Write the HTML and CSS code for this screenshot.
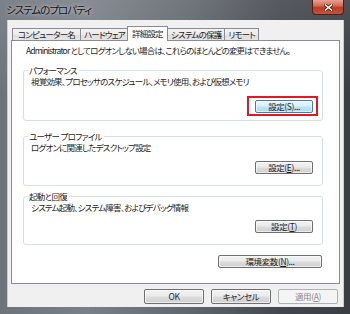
FILE: index.html
```html
<!DOCTYPE html>
<html lang="ja">
<head>
<meta charset="utf-8">
<title>システムのプロパティ</title>
<link rel="stylesheet" href="styles.css">
</head>
<body>
<div class="window">
  <div class="titlebar">
    <span class="title">システムのプロパティ</span>
    <div class="close">
      <svg width="9" height="7" viewBox="0 0 9 7"><path d="M1.5 1 L7.5 6 M7.5 1 L1.5 6" stroke="#5a1a10" stroke-width="3" stroke-linecap="square"/><path d="M1.5 1 L7.5 6 M7.5 1 L1.5 6" stroke="#fff" stroke-width="1.6" stroke-linecap="square"/></svg>
    </div>
  </div>
  <div class="client">
    <div class="tabs">
      <div class="tab tab--wide">コンピューター名</div>
      <div class="tab">ハードウェア</div>
      <div class="tab tab--active">詳細設定</div>
      <div class="tab">システムの保護</div>
      <div class="tab">リモート</div>
    </div>
    <div class="panel">
      <p class="note">Administrator としてログオンしない場合は、これらのほとんどの変更はできません。</p>
      <fieldset class="group group--perf">
        <legend>パフォーマンス</legend>
        <p class="desc">視覚効果、プロセッサのスケジュール、メモリ使用、および仮想メモリ</p>
        <div class="btnrow"><button class="btn btn--default btn--flagged">設定(S)...</button></div>
      </fieldset>
      <fieldset class="group group--profile">
        <legend>ユーザー プロファイル</legend>
        <p class="desc">ログオンに関連したデスクトップ設定</p>
        <div class="btnrow"><button class="btn">設定(<u>E</u>)...</button></div>
      </fieldset>
      <fieldset class="group group--startup">
        <legend>起動と回復</legend>
        <p class="desc">システム起動、システム障害、およびデバッグ情報</p>
        <div class="btnrow"><button class="btn">設定(<u>T</u>)</button></div>
      </fieldset>
      <div class="envrow"><button class="btn btn--wide">環境変数(<u>N</u>)...</button></div>
    </div>
    <div class="footer">
      <button class="btn btn--foot">OK</button>
      <button class="btn btn--foot">キャンセル</button>
      <button class="btn btn--foot" disabled>適用(<u>A</u>)</button>
    </div>
  </div>
</div>
</body>
</html>
```

FILE: styles.css
```css
html, body {
  margin: 0;
  padding: 0;
}
body {
  width: 350px;
  height: 314px;
  overflow: hidden;
  font-family: "Noto Sans CJK JP", "Noto Sans", sans-serif;
  font-feature-settings: "palt";
  color: #1e1e1e;
}
.window {
  width: 350px;
  height: 314px;
  box-sizing: border-box;
  padding: 0 6px 7px 7px;
  display: flex;
  flex-direction: column;
  background:
    linear-gradient(180deg, rgba(255,255,255,0.10) 0%, rgba(255,255,255,0) 30%),
    linear-gradient(90deg, #6d737b 0%, #7b8088 25%, #60656c 55%, #43474d 80%, #3a3e44 100%);
}
.titlebar {
  height: 20px;
  flex: none;
  display: flex;
  justify-content: space-between;
  align-items: flex-start;
}
.title {
  font-size: 10.5px;
  line-height: 19px;
  letter-spacing: -1px;
  margin-left: -1px;
  color: #101010;
  text-shadow: 0 0 5px rgba(255,255,255,0.55), 0 0 2px rgba(255,255,255,0.4);
}
.close {
  width: 32px;
  height: 15px;
  box-sizing: border-box;
  border: 1px solid #4b2019;
  border-top: none;
  border-radius: 0 0 4px 4px;
  background: linear-gradient(180deg, #e4a396 0%, #d76a55 40%, #bd3b23 55%, #c5523a 100%);
  display: flex;
  align-items: center;
  justify-content: center;
}
.client {
  flex: 1;
  background: #f0f0f0;
  display: flex;
  flex-direction: column;
  box-shadow: inset 1px 0 0 #c9ced4, inset -1px 0 0 #c9ced4;
}
.tabs {
  display: flex;
  align-items: flex-end;
  height: 20px;
  padding-left: 5px;
  position: relative;
  z-index: 1;
}
.tab {
  font-size: 8.5px;
  letter-spacing: -0.8px;
  line-height: 11px;
  height: 12px;
  box-sizing: border-box;
  padding: 0 3px 0 3px;
  border: 1px solid #898c95;
  border-bottom: none;
  margin-left: -1px;
  background: linear-gradient(180deg, #f3f3f3 0%, #ebebeb 50%, #dedede 51%, #e5e5e5 100%);
  color: #1e1e1e;
  white-space: nowrap;
}
.tab:first-child {
  margin-left: 0;
}
.tab--wide {
  padding: 0 5px 0 5px;
}
.tab--active {
  height: 15px;
  margin: 0 -1px -1px -2px;
  padding: 1px 4px 0;
  background: #fff;
  position: relative;
}
.tab--active + .tab {
  margin-left: 0;
}
.panel {
  margin: 0 4px 0 4px;
  height: 244px;
  box-sizing: border-box;
  border: 1px solid #898c95;
  background: #fff;
  display: flex;
  flex-direction: column;
}
.note {
  margin: 3px 0 0 14px;
  font-size: 8.5px;
  letter-spacing: -0.85px;
  line-height: 12px;
  white-space: nowrap;
}
.group {
  margin: 8px 0 0 11px;
  width: 300px;
  box-sizing: border-box;
  padding: 0 9px 0 6px;
  border: 1px solid #d5dfe5;
  border-radius: 3px;
  min-inline-size: 0;
}
.group legend {
  font-size: 8.5px;
  letter-spacing: -0.7px;
  line-height: 12px;
  padding: 0 2px 0 1px;
  margin-left: -2px;
  white-space: pre;
}
.desc {
  margin: 0 0 0 1px;
  font-size: 8.5px;
  letter-spacing: -0.8px;
  line-height: 11px;
  white-space: nowrap;
}
.btnrow {
  display: flex;
  justify-content: flex-end;
}
.group--perf .btnrow {
  margin-top: 13px;
  margin-bottom: 7px;
}
.group--profile {
  margin-top: 9px;
}
.group--profile .btnrow {
  margin-top: 8px;
  margin-bottom: 11px;
}
.group--startup {
  margin-top: 4px;
}
.group--startup .btnrow {
  margin-top: 7px;
  margin-bottom: 11px;
}
.btn {
  font-family: inherit;
  font-feature-settings: "palt";
  font-size: 8.5px;
  letter-spacing: -0.4px;
  line-height: 11px;
  width: 58px;
  height: 13px;
  padding: 0;
  margin: 0;
  box-sizing: border-box;
  border: 1px solid #707070;
  border-radius: 2px;
  color: #1e1e1e;
  background: linear-gradient(180deg, #f2f2f2 0%, #ebebeb 48%, #dddddd 52%, #cfcfcf 100%);
  box-shadow: inset 0 0 0 1px rgba(255,255,255,0.6);
}
.btn u {
  text-underline-offset: 1px;
}
.btn--default {
  border-color: #3c7fb1;
  background: linear-gradient(180deg, #eaf6fd 0%, #d9f0fc 48%, #bee6fd 52%, #a7d9f5 100%);
}
.btn--flagged {
  position: relative;
}
.btn--flagged::after {
  content: "";
  position: absolute;
  left: -9px;
  right: -6px;
  top: -5px;
  bottom: -4px;
  border: 2px solid #e8161f;
}
.envrow {
  display: flex;
  justify-content: flex-end;
  margin: 10px 17px 0 0;
}
.btn--wide {
  width: 104px;
}
.footer {
  display: flex;
  justify-content: flex-end;
  gap: 7px;
  margin: 5px 6px 0 0;
}
.btn--foot {
  width: 60px;
  height: 15px;
  line-height: 13px;
}
.btn--foot:disabled {
  color: #8b8b8b;
  border-color: #adb2b5;
  background: #f4f4f4;
  box-shadow: none;
}
```
